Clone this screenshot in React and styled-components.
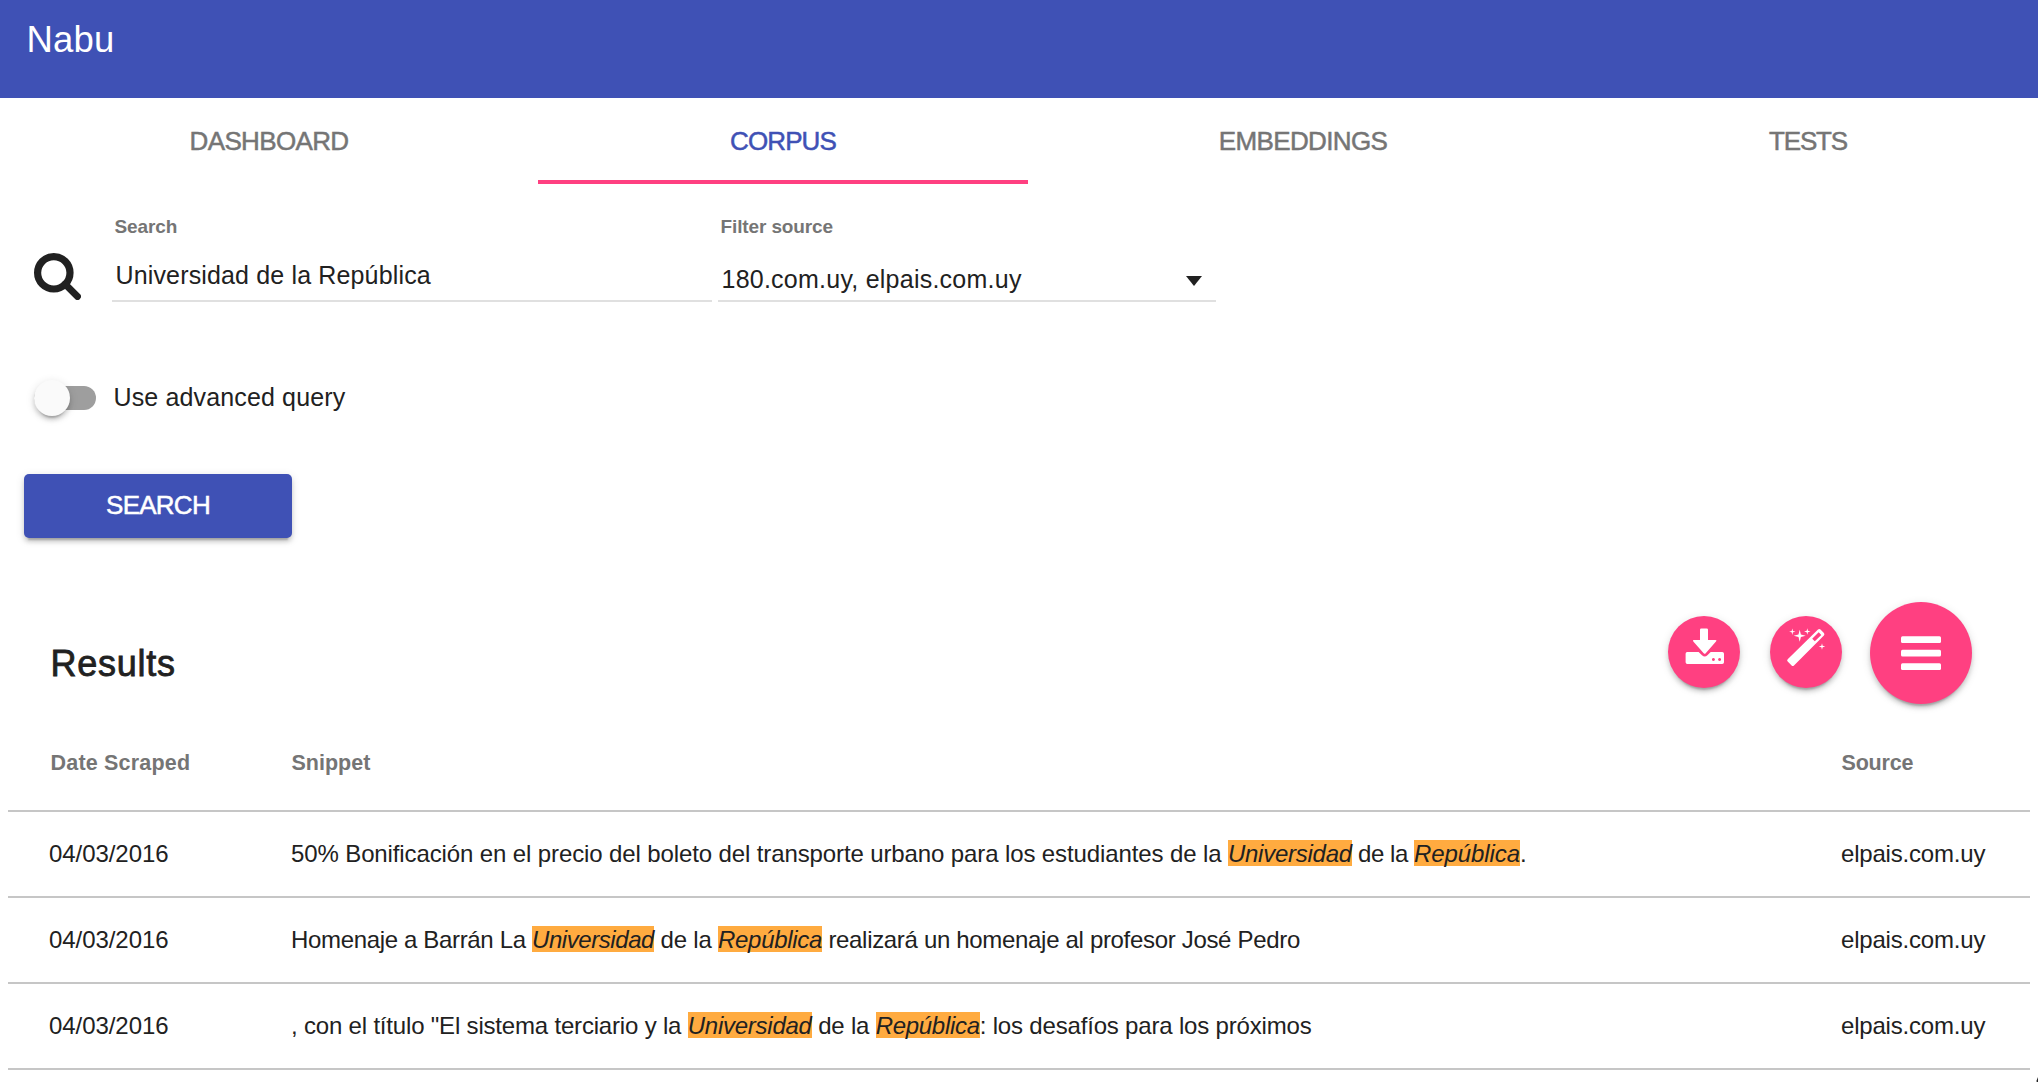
import React from "react";
import styled, { createGlobalStyle } from "styled-components";

const color = {
  primary: "#3f51b5",
  accent: "#ff4081",
  text: "#212121",
  muted: "#757575",
  rule: "#c6c6c6",
  fieldRule: "#e0e0e0",
  highlight: "#ffab40",
};

const raised =
  "0 4px 4px 0 rgba(0,0,0,.14), 0 6px 2px -4px rgba(0,0,0,.2), 0 2px 10px 0 rgba(0,0,0,.12)";

const GlobalStyle = createGlobalStyle`
  *, *::before, *::after { box-sizing: border-box; }
  html, body { margin: 0; padding: 0; overflow: hidden; background: #fff; }
  body {
    font-family: "Liberation Sans", Arial, sans-serif;
    color: ${color.text};
  }
`;

const Page = styled.div`
  display: flex;
  flex-direction: column;
  width: 2038px;
  height: 1082px;
  overflow: hidden;
`;

const Header = styled.header`
  height: 98px;
  flex: none;
  padding: 19px 26.5px 0;
  background: ${color.primary};
`;

const Brand = styled.h1`
  margin: 0;
  font-size: 36.5px;
  font-weight: 400;
  line-height: 42px;
  letter-spacing: 0.2px;
  color: #fff;
`;

const Tabs = styled.nav`
  display: grid;
  grid-template-columns: 538px 490px 550px 460px;
  height: 86px;
  flex: none;
`;

const Tab = styled.a`
  padding-top: 28px;
  text-align: center;
  font-size: 26px;
  line-height: 30px;
  letter-spacing: ${(p) => p.$tracking}px;
  -webkit-text-stroke: 0.5px currentColor;
  color: ${(p) => (p.$active ? color.primary : color.muted)};
  border-bottom: 4px solid ${(p) => (p.$active ? color.accent : "transparent")};
`;

const SearchForm = styled.form`
  display: flex;
  flex-direction: column;
  align-items: flex-start;
  flex: none;
`;

const FieldRow = styled.div`
  display: flex;
  align-items: flex-end;
  padding: 32px 0 0 34px;
`;

const SearchGlyph = styled.svg`
  width: 47px;
  height: 47px;
  margin: 0 31px 2.5px 0;
`;

const Field = styled.div`
  width: ${(p) => p.$width}px;
  margin-right: 6px;
  padding-left: 2.5px;
  border-bottom: 2px solid ${color.fieldRule};
`;

const FieldLabel = styled.div`
  font-size: 19px;
  font-weight: 700;
  line-height: 21px;
  letter-spacing: -0.12px;
  color: ${color.muted};
`;

const FieldValue = styled.div`
  display: flex;
  justify-content: space-between;
  align-items: flex-start;
  height: 63px;
  padding: ${(p) => p.$drop}px 0 0 1px;
  font-size: 25px;
  line-height: 28px;
  letter-spacing: ${(p) => p.$tracking}px;
`;

const Caret = styled.span`
  width: 0;
  height: 0;
  margin: 11px 14.5px 0 0;
  border: solid transparent;
  border-width: 10.5px 8.5px 0;
  border-top-color: ${color.text};
`;

const ToggleRow = styled.label`
  display: flex;
  align-items: flex-start;
  margin: 78px 0 0 34px;
  height: 36px;
`;

const Track = styled.span`
  display: flex;
  align-items: center;
  width: 62px;
  height: 24px;
  margin: 6px 17.5px 0 0;
  border-radius: 12px;
  background: #9e9e9e;
`;

const Thumb = styled.span`
  flex: none;
  width: 36px;
  height: 36px;
  border-radius: 50%;
  background: #fafafa;
  box-shadow: ${raised};
`;

const ToggleText = styled.span`
  padding-top: 3px;
  font-size: 25px;
  line-height: 28px;
  letter-spacing: 0.14px;
`;

const SearchButton = styled.button`
  width: 268px;
  height: 64px;
  margin: 58px 0 0 24px;
  padding: 0 0 2px;
  border: 0;
  border-radius: 5px;
  font: 400 26px/30px "Liberation Sans", Arial, sans-serif;
  letter-spacing: -0.75px;
  -webkit-text-stroke: 0.5px currentColor;
  color: #fff;
  background: ${color.primary};
  box-shadow: ${raised};
`;

const ResultsHead = styled.div`
  display: flex;
  justify-content: space-between;
  flex: none;
  height: 102px;
  margin-top: 64px;
  padding: 0 66px 0 50.5px;
`;

const ResultsTitle = styled.h2`
  margin: 41px 0 0;
  font-size: 36px;
  font-weight: 400;
  line-height: 41px;
  letter-spacing: 0.75px;
  -webkit-text-stroke: 0.8px currentColor;
`;

const Actions = styled.div`
  display: flex;
  align-items: flex-start;
`;

const RoundButton = styled.button`
  display: flex;
  justify-content: ${(p) => (p.$large ? "center" : "flex-start")};
  align-items: flex-start;
  width: ${(p) => (p.$large ? 102 : 72)}px;
  height: ${(p) => (p.$large ? 102 : 72)}px;
  margin: ${(p) => (p.$large ? "0" : "14px")} 0 0 ${(p) => (p.$large ? 28 : 30)}px;
  padding: ${(p) => p.$inset};
  border: 0;
  border-radius: 50%;
  background: ${color.accent};
  box-shadow: ${raised};
`;

const Glyph = styled.svg`
  flex: none;
  fill: #fff;
`;

const Table = styled.div`
  display: flex;
  flex-direction: column;
  flex: none;
  margin: 0 8px;
`;

const Row = styled.div`
  display: grid;
  grid-template-columns: 242px 1550px 1fr;
  height: 86px;
  padding: 28px 0 0 41px;
  border-bottom: 2px solid ${color.rule};
  font-size: 24px;
  line-height: 27px;
  white-space: pre;
`;

const HeadRow = styled(Row)`
  grid-template-columns: 241px 1550px 1fr;
  height: 108px;
  padding: 47px 0 0 42.5px;
  font-size: 21.5px;
  font-weight: 700;
  line-height: 24px;
  color: ${color.muted};
`;

const Cell = styled.div`
  letter-spacing: ${(p) => p.$tracking || 0}px;
`;

const Run = styled.span`
  letter-spacing: ${(p) => p.$tracking}px;
`;

const Match = styled.em`
  letter-spacing: ${(p) => p.$tracking}px;
  background: linear-gradient(${color.highlight}, ${color.highlight}) 0 0 / 100% 26px no-repeat;
`;

const Pointer = styled.svg`
  position: fixed;
  right: 0;
  bottom: 0;
  width: 2px;
  height: 5px;
`;

const tabs = [
  { name: "DASHBOARD", tracking: -0.65 },
  { name: "CORPUS", tracking: -0.9, active: true },
  { name: "EMBEDDINGS", tracking: -0.65 },
  { name: "TESTS", tracking: -1.2 },
];

const rows = [
  {
    date: "04/03/2016",
    source: "elpais.com.uy",
    parts: [
      ["50% Bonificación en el precio del boleto del transporte urbano para los estudiantes de la ", -0.115],
      ["Universidad", -0.25, true],
      [" de la ", -0.48],
      ["República", -0.08, true],
      [".", 0],
    ],
  },
  {
    date: "04/03/2016",
    source: "elpais.com.uy",
    parts: [
      ["Homenaje a Barrán La ", -0.34],
      ["Universidad", -0.43, true],
      [" de la ", -0.2],
      ["República", -0.3, true],
      [" realizará un homenaje al profesor José Pedro", -0.32],
    ],
  },
  {
    date: "04/03/2016",
    source: "elpais.com.uy",
    parts: [
      [", con el título \"El sistema terciario y la ", -0.185],
      ["Universidad", -0.25, true],
      [" de la ", -0.2],
      ["República", -0.3, true],
      [": los desafíos para los próximos", -0.18],
    ],
  },
];

const star = (x, y, r) => {
  const k = r * 0.2;
  return `M${x} ${y - r}L${x + k} ${y - k}L${x + r} ${y}L${x + k} ${y + k}L${x} ${y + r}L${x - k} ${y + k}L${x - r} ${y}L${x - k} ${y - k}Z`;
};

function DownloadGlyph() {
  return (
    <Glyph width="40" height="37" viewBox="0 0 40 37">
      <path d="M16.3 .4h5.4q1.3 0 1.3 1.3V12h7.2q2 0 .8 1.4L20.7 25.2q-1 1-2 0L8.3 13.4Q7.2 12 9 12h6V1.7Q15 .4 16.3 .4Z" />
      <path
        fillRule="evenodd"
        d="M2.2 24H13.600L17 27.300q2.700 2.400 5.400 0L25.700 24H37.200q1.800 0 1.800 1.800v8.400q0 1.800-1.800 1.800H2.300Q.6 36 .6 34.200V25.800Q.6 24 2.200 24ZM28.400 30.100a1.500 1.500 0 1 0 .01 0ZM34.600 30.100a1.500 1.500 0 1 0 .01 0Z"
      />
    </Glyph>
  );
}

function WandGlyph() {
  return (
    <Glyph width="40" height="39" viewBox="0 0 40 39">
      <path
        fillRule="evenodd"
        d="M32 1.600q1.300-1.100 2.500 0L37.900 5q1.100 1.200 0 2.400L8 37.500q-1.200 1.100-2.400 0L1.700 33.600q-1.200-1.200 0-2.400ZM26.200 10.700L28.800 13.300L35.300 6.900L32.700 4.300Z"
      />
      <path d={star(13.7, 7.7, 6)} />
      <path d={star(6.3, 3.7, 3.2)} />
      <path d={star(21.3, 3.5, 3.2)} />
      <path d={star(36, 18.5, 3.2)} />
    </Glyph>
  );
}

function MenuGlyph() {
  return (
    <Glyph width="40" height="34" viewBox="0 0 40 34">
      <rect x="0" y="0.3" width="40" height="6.7" rx="1.5" />
      <rect x="0" y="13.7" width="40" height="6.9" rx="1.5" />
      <rect x="0" y="27.2" width="40" height="6.7" rx="1.5" />
    </Glyph>
  );
}

export default function App() {
  return (
    <Page>
      <GlobalStyle />
      <Header>
        <Brand>Nabu</Brand>
      </Header>
      <Tabs>
        {tabs.map((t) => (
          <Tab key={t.name} $active={t.active} $tracking={t.tracking}>
            {t.name}
          </Tab>
        ))}
      </Tabs>

      <SearchForm>
        <FieldRow>
          <SearchGlyph viewBox="0 0 47 47" fill="none" stroke={color.text}>
            <circle cx="19.8" cy="19.8" r="16.2" strokeWidth="7.2" />
            <path d="M31 31L43.5 43.5" strokeWidth="6.8" strokeLinecap="round" />
          </SearchGlyph>
          <Field $width={600}>
            <FieldLabel>Search</FieldLabel>
            <FieldValue $drop={24} $tracking={0.15}>
              Universidad de la República
            </FieldValue>
          </Field>
          <Field $width={498}>
            <FieldLabel>Filter source</FieldLabel>
            <FieldValue $drop={28} $tracking={0.24}>
              180.com.uy, elpais.com.uy
              <Caret />
            </FieldValue>
          </Field>
        </FieldRow>
        <ToggleRow>
          <Track>
            <Thumb />
          </Track>
          <ToggleText>Use advanced query</ToggleText>
        </ToggleRow>
        <SearchButton type="button">SEARCH</SearchButton>
      </SearchForm>

      <ResultsHead>
        <ResultsTitle>Results</ResultsTitle>
        <Actions>
          <RoundButton $inset="12px 0 0 17px" aria-label="Download">
            <DownloadGlyph />
          </RoundButton>
          <RoundButton $inset="12px 0 0 16px" aria-label="Magic">
            <WandGlyph />
          </RoundButton>
          <RoundButton $large $inset="34px 0 0" aria-label="Menu">
            <MenuGlyph />
          </RoundButton>
        </Actions>
      </ResultsHead>

      <Table>
        <HeadRow>
          <Cell $tracking={0.2}>Date Scraped</Cell>
          <Cell>Snippet</Cell>
          <Cell $tracking={-0.2}>Source</Cell>
        </HeadRow>
        {rows.map((row, i) => (
          <Row key={i}>
            <Cell $tracking={-0.06}>{row.date}</Cell>
            <Cell>
              {row.parts.map(([text, tracking, match], j) =>
                match ? (
                  <Match key={j} $tracking={tracking}>
                    {text}
                  </Match>
                ) : (
                  <Run key={j} $tracking={tracking}>
                    {text}
                  </Run>
                )
              )}
            </Cell>
            <Cell $tracking={-0.19}>{row.source}</Cell>
          </Row>
        ))}
      </Table>

      <Pointer viewBox="0 0 2 5">
        <path d="M2 0V5H.6V3.6Z" fill="#222" />
      </Pointer>
    </Page>
  );
}
